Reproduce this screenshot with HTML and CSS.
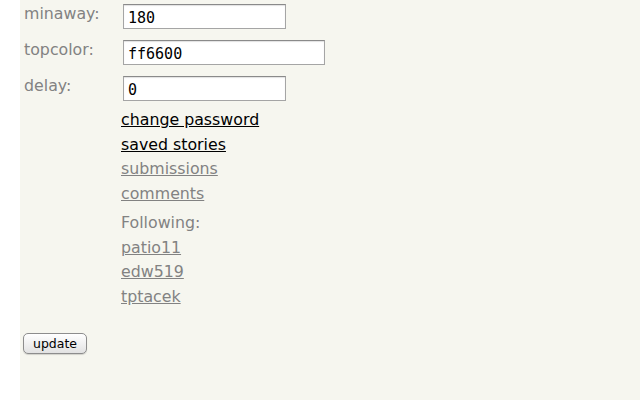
FILE: index.html
```html
<!DOCTYPE html>
<html>
<head>
<meta charset="utf-8">
<link rel="stylesheet" href="styles.css">
</head>
<body>
<div class="page">
  <div class="settings">
    <div class="label">minaway:</div>
    <div class="field"><input class="txt short" type="text" value="180"></div>
    <div class="label">topcolor:</div>
    <div class="field"><input class="txt long" type="text" value="ff6600"></div>
    <div class="label">delay:</div>
    <div class="field"><input class="txt short" type="text" value="0"></div>
  </div>
  <div class="links">
    <a class="dark" href="#">change password</a>
    <a class="dark" href="#">saved stories</a>
    <a class="gray" href="#">submissions</a>
    <a class="gray" href="#">comments</a>
  </div>
  <div class="following">
    <div class="heading">Following:</div>
    <a class="gray" href="#">patio11</a>
    <a class="gray" href="#">edw519</a>
    <a class="gray" href="#">tptacek</a>
  </div>
  <div class="actions">
    <button class="btn" type="button">update</button>
  </div>
</div>
</body>
</html>
```
FILE: styles.css
```css
html, body {
  margin: 0;
  padding: 0;
  background: #ffffff;
}
.page {
  margin-left: 20px;
  min-height: 400px;
  background: #f6f6ef;
  padding-top: 4px;
  font-family: "DejaVu Sans", Verdana, sans-serif;
  font-size: 15.8px;
  color: #828282;
}
.settings {
  display: grid;
  grid-template-columns: 101px auto;
  row-gap: 11px;
}
.label {
  padding-left: 4px;
  line-height: 19px;
}
.field {
  height: 25px;
}
.txt {
  box-sizing: border-box;
  margin: 0 0 0 2px;
  height: 25px;
  padding: 2px 4px 0 4px;
  border: 1px solid #a5a5a5;
  border-top-color: #8a8a8a;
  box-shadow: inset 0 1px 1px rgba(0,0,0,0.12);
  background: #ffffff;
  font-family: "DejaVu Sans Mono", monospace;
  font-size: 15px;
  color: #000;
  outline: none;
}
.short { width: 163px; }
.long { width: 202px; }
.links, .following {
  display: flex;
  flex-direction: column;
  align-items: flex-start;
  padding-left: 101px;
  line-height: 24.5px;
}
.links { margin-top: 7px; }
.following { margin-top: 5px; }
a { text-decoration: underline; }
a.dark { color: #000; }
a.gray { color: #828282; }
.actions {
  padding: 24px 0 0 3px;
}
.btn {
  box-sizing: border-box;
  width: 64px;
  height: 21px;
  padding: 0;
  border: 1px solid #8d8d8d;
  border-radius: 5px;
  background: linear-gradient(#ffffff, #f1f1f1 50%, #e2e2e2);
  box-shadow: 0 1px 1px rgba(0,0,0,0.15);
  font-family: "DejaVu Sans", Verdana, sans-serif;
  font-size: 12.5px;
  color: #000;
}
```
